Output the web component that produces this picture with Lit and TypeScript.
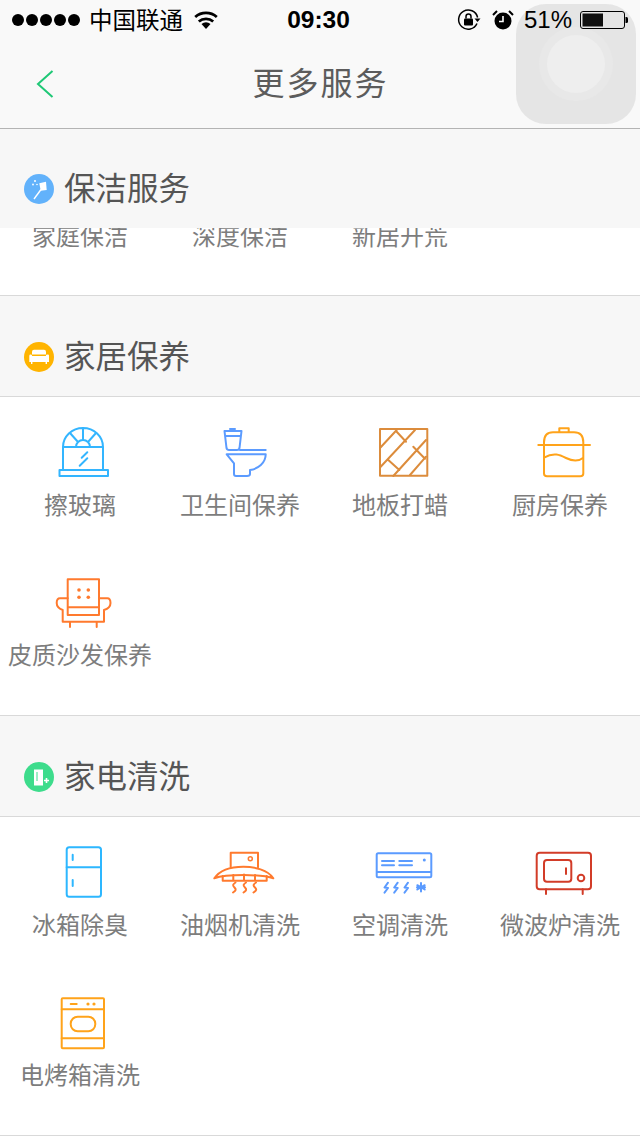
import { LitElement, css, html, svg } from 'lit';
import { customElement } from 'lit/decorators.js';

const line = (color: string, body: unknown) => html`
  <svg class="icon" viewBox="0 0 80 60" fill="none" stroke=${color} stroke-width="2" stroke-linecap="round" stroke-linejoin="round">${body}</svg>
`;

const squiggle = (x: number) => svg`<path d="M${x + 1.5} 41.5c-3 2-3 3 -1 5s1.5 3-1.5 5" />`;

const icons = {
  window: line('#33b5ff', svg`
    <path d="M23 49V26a20 19 0 0 1 40 0V49M23 26H63M36 26a7 7 0 0 1 14 0M43 7V19M30 12l8 9M56 12l-8 9" />
    <path d="M41.7 36.7l5.6-5.4M39.7 44.7l7.6-7.4" />
    <rect x="19.5" y="49" width="48.5" height="6" />
  `),
  toilet: line('#5b9bff', svg`
    <path d="M24.5 10H41.5L39.5 27Q39 29 37 29H29Q27 29 26.5 27ZM25.5 15H40.5M30 8h5M40 29H65.7" />
    <path d="M26.7 33.3H65.7C65.7 42 58 48 50 49V53Q50 55 47 55H36Q34 55 34 53V42.3Z" />
  `),
  floor: line('#dc8c3c', svg`
    <rect x="20" y="8" width="47.3" height="46.7" />
    <path d="M36.7 9L20.7 26.3M36.7 10.7L46 20.7M55 9L20.7 45.7M66 19L33.3 55M28.3 39L39.3 49M66 35.7L50 54M53.3 25.7L65 37.7" />
  `),
  pot: line('#ffa31a', svg`
    <path d="M39.3 11.3V7.3H48.7V11.3M24 21.3C24 14 28 11.3 33 11.3H54C59 11.3 63.3 14 63.3 21.3V24M24 21.3V24M18.3 24H70" />
    <path d="M24 24V52.5Q24 55.3 27 55.3H60.3Q63.3 55.3 63.3 52.5V24M24 36.7C34 31 40 34 46 37S58 41 63.3 36.7" />
  `),
  sofa: line('#ff7a2e', svg`
    <path d="M27.7 36.3V8.3H59V36.3M27.7 36.3H59M27.7 36.3V44H59V36.3" />
    <path d="M27.7 27.3H20Q16.7 27.3 16.7 32T22.7 39V50.7H64V39Q70.5 37 70.5 32T67 27.3H59M30 50.7V56M56.7 50.7V56" />
    <g fill="#ff7a2e" stroke="none">
      <circle cx="39" cy="19" r="1.8" /><circle cx="48.3" cy="19" r="1.8" />
      <circle cx="39" cy="26.3" r="1.8" /><circle cx="48.3" cy="26.3" r="1.8" />
    </g>
  `),
  fridge: line('#2db7ff', svg`
    <rect x="26.7" y="6.3" width="34.3" height="49.4" rx="2.5" />
    <path d="M26.7 26.3H61M32.7 13.7V19M32.7 39V45" />
  `),
  hood: line('#ff7a2e', svg`
    <path d="M30.7 26.3V11.7H58V26.3" />
    <circle cx="50.3" cy="17.7" r="2" stroke-width="1.5" />
    <path d="M14.3 37.3C20 29 32 25.7 43.3 25.7S68 29 73.3 37.3C62 33 26 33 14.3 37.3Z" />
    <path d="M22.7 35V39.7H66.7V35M33.3 34V39.7M44 33.5V39.7M55 34V39.7" />
    ${squiggle(34)}${squiggle(44.5)}${squiggle(54.5)}
  `),
  ac: line('#5b9bff', svg`
    <rect x="16.7" y="12.3" width="54.6" height="24" rx="1.5" />
    <path d="M17 31H71M22 20H34M39.3 20H52M22 24.3H34M39.3 24.3H52" />
    <circle cx="64.3" cy="19" r="1.5" fill="#5b9bff" stroke="none" />
    <path d="M28 41.7L24.5 46.5 28 47 24.5 51.7M37.7 41.7L34.2 46.5 37.7 47 34.2 51.7M48 41.7L44.5 46.5 48 47 44.5 51.7" />
    <path d="M61 42V50.6M57.3 44.2L64.7 48.4M64.7 44.2L57.3 48.4M57 46.3H65" />
  `),
  microwave: line('#d23c28', svg`
    <rect x="16.7" y="11.7" width="54.3" height="36.6" rx="3" />
    <rect x="24" y="19" width="27.3" height="21.7" rx="3" />
    <path d="M46 27.3V33M26 48.3V53M62.7 48.3V53" />
    <circle cx="61" cy="37" r="3.3" />
  `),
  oven: line('#ffa31a', svg`
    <rect x="21.7" y="7.3" width="42.3" height="50" rx="1" />
    <path d="M21.7 18.3H64M21.7 47.3H64M30.7 13H36.7" />
    <rect x="30.7" y="25.7" width="24.6" height="14.6" rx="7" />
    <circle cx="48" cy="13" r="1.6" fill="#ffa31a" stroke="none" />
    <circle cx="54" cy="13" r="1.6" fill="#ffa31a" stroke="none" />
  `),
};

const badge = (color: string, body: unknown) => html`
  <svg class="badge" viewBox="0 0 30 30"><circle cx="15" cy="15" r="15" fill=${color} />${body}</svg>
`;

const badges = {
  duster: badge('#62b2fb', svg`
    <path d="M15.3 9.3L22 7.7 22.7 16 16.7 16.7Z" fill="#fff" />
    <path d="M17 15.5L10 25" stroke="#fff" stroke-width="1.4" />
    <circle cx="11" cy="7" r="1" fill="#fff" /><circle cx="9" cy="10.5" r="0.9" fill="#fff" /><circle cx="13" cy="10.5" r="0.8" fill="#fff" />
  `),
  sofa: badge('#ffb400', svg`
    <path d="M8 12.6V9.7Q8 7.7 10 7.7H20Q22 7.7 22 9.7V12.6Z" fill="#fff" />
    <path d="M5.3 14Q5.3 12.6 6.6 12.6T8.2 14H21.8Q21.8 12.6 23.6 12.6T25 14V20H23V22H21.6V20H8.4V22H7V20H5.3Z" fill="#fff" />
  `),
  fridge: badge('#3ddc8c', svg`
    <rect x="10" y="7.5" width="9" height="16" fill="#fff" />
    <path d="M13 10V19" stroke="#3ddc8c" stroke-width="1" />
    <path d="M22.5 16V21M20 18.5H25" stroke="#fff" stroke-width="1.6" />
  `),
};

const sections = [
  {
    title: '家居保养',
    badge: badges.sofa,
    items: [
      ['擦玻璃', icons.window],
      ['卫生间保养', icons.toilet],
      ['地板打蜡', icons.floor],
      ['厨房保养', icons.pot],
      ['皮质沙发保养', icons.sofa],
    ],
  },
  {
    title: '家电清洗',
    badge: badges.fridge,
    items: [
      ['冰箱除臭', icons.fridge],
      ['油烟机清洗', icons.hood],
      ['空调清洗', icons.ac],
      ['微波炉清洗', icons.microwave],
      ['电烤箱清洗', icons.oven],
    ],
  },
];

@customElement('app-root')
class AppRoot extends LitElement {
  static styles = css`
    :host {
      display: block;
      position: relative;
      width: 640px;
      height: 1136px;
      overflow: hidden;
      background: #fff;
      font-family: 'Noto Sans CJK SC', 'Liberation Sans', sans-serif;
    }

    .top {
      height: 128px;
      background: #f9f9f9;
      border-bottom: 1px solid #b4b4b4;
    }

    .status {
      position: relative;
      z-index: 2;
      display: grid;
      grid-template-columns: 1fr auto 1fr;
      align-items: center;
      height: 40px;
      padding: 0 12px 0 12px;
      color: #000;
      font-size: 23.5px;
    }
    .status > div {
      display: flex;
      align-items: center;
    }
    .left { justify-content: flex-start; }
    .left span:nth-child(2) { margin-bottom: 2px; }
    .right { justify-content: flex-end; }
    .dots { display: flex; gap: 2px; margin-right: 9px; }
    .dots i {
      width: 12px;
      height: 12px;
      border-radius: 50%;
      background: #000;
    }
    .wifi { margin-left: 11px; margin-bottom: 1px; }
    .time {
      font: bold 24.5px 'Liberation Sans', sans-serif;
      margin-right: 3px;
    }
    .pct {
      font: 24px 'Liberation Sans', sans-serif;
      margin: 0 8px 0 10px;
    }
    .lock { margin-right: 11px; }

    .nav {
      position: relative;
      display: flex;
      align-items: center;
      justify-content: center;
      height: 88px;
    }
    .back {
      position: absolute;
      left: 36px;
      top: 29px;
    }
    .title {
      font-size: 32px;
      letter-spacing: 2px;
      color: #5c5c5c;
      margin: 0 0 7px 1px;
    }

    .touch {
      position: absolute;
      left: 516px;
      top: 4px;
      width: 120px;
      height: 120px;
      border-radius: 30px;
      background: rgba(226, 226, 226, 0.86);
      display: flex;
      align-items: center;
      justify-content: center;
    }
    .touch .ring {
      width: 74px;
      height: 74px;
      border-radius: 50%;
      background: #e8e8e8;
      display: flex;
      align-items: center;
      justify-content: center;
    }
    .touch .core {
      width: 58px;
      height: 58px;
      border-radius: 50%;
      background: #eeeeee;
    }

    .head {
      box-sizing: border-box;
      display: flex;
      align-items: center;
      gap: 10px;
      height: 101px;
      padding: 46px 0 24px 24px;
      background: #f7f7f7;
      border-bottom: 1px solid #d9d9d9;
      color: #555;
      font-size: 31.5px;
      line-height: 30px;
    }
    .head span { margin-bottom: 6px; }
    .head.first {
      height: 99px;
      padding: 45px 0 24px 24px;
      border-bottom: none;
    }
    .badge { width: 30px; height: 30px; flex: none; }

    .section { border-bottom: 1px solid #d9d9d9; }

    .clipped {
      display: grid;
      grid-template-columns: repeat(4, 160px);
      height: 67px;
      overflow: hidden;
    }
    .clipped .label { margin-top: -8px; }

    .grid {
      display: grid;
      grid-template-columns: repeat(4, 160px);
      grid-auto-rows: 150px;
      padding-bottom: 18px;
    }
    .item {
      display: flex;
      flex-direction: column;
      align-items: center;
      padding-top: 24px;
    }
    .icon { width: 80px; height: 60px; margin-bottom: 8px; display: block; }
    .label {
      font-size: 24px;
      line-height: 30px;
      color: #7d7d7d;
      text-align: center;
      white-space: nowrap;
    }
  `;

  protected render(): unknown {
    return html`
      <div class="top">
        <div class="status">
          <div class="left">
            <span class="dots"><i></i><i></i><i></i><i></i><i></i></span>
            <span>中国联通</span>
            <svg class="wifi" width="24" height="18" viewBox="0 0 24 18">
              <path d="M12 18L7.5 13a7 7 0 0 1 9 0Z" />
              <path d="M4.8 10.5a11 11 0 0 1 14.4 0" fill="none" stroke="#000" stroke-width="2.8" />
              <path d="M1.2 6a16.5 16.5 0 0 1 21.6 0" fill="none" stroke="#000" stroke-width="2.8" />
            </svg>
          </div>
          <div class="time">09:30</div>
          <div class="right">
            <svg class="lock" width="24" height="24" viewBox="0 0 24 24">
              <path d="M20 15.5A9.6 9.6 0 1 1 20.6 9.5" fill="none" stroke="#000" stroke-width="1.5" />
              <path d="M17.5 10.5h6l-3 3.5Z" />
              <rect x="7" y="10.5" width="9" height="7" rx="1" />
              <path d="M9 10.5V8.5a2.5 2.5 0 0 1 5 0v2" fill="none" stroke="#000" stroke-width="1.5" />
            </svg>
            <svg width="22" height="22" viewBox="0 0 22 22">
              <circle cx="11" cy="12" r="8.5" />
              <path d="M11 7V12.5H7" fill="none" stroke="#fff" stroke-width="1.6" />
              <path d="M1 6L5 2M21 6L17 2" stroke="#000" stroke-width="2" />
            </svg>
            <span class="pct">51%</span>
            <svg width="48" height="18" viewBox="0 0 48 18">
              <rect x="0.5" y="0.5" width="44" height="17" rx="2.5" fill="none" stroke="#000" />
              <rect x="2.5" y="2.5" width="20.5" height="13" fill="#111" />
              <path d="M45.5 6h1a1.5 1.5 0 0 1 1.5 1.5v3a1.5 1.5 0 0 1-1.5 1.5h-1Z" />
            </svg>
          </div>
        </div>
        <div class="nav">
          <svg class="back" width="18" height="30" viewBox="0 0 18 30" fill="none" stroke="#1fc876" stroke-width="2">
            <path d="M16.5 2L2 15 16.5 28" />
          </svg>
          <span class="title">更多服务</span>
        </div>
      </div>

      <div class="section">
        <div class="head first">${badges.duster}<span>保洁服务</span></div>
        <div class="clipped">
          <div class="label">家庭保洁</div>
          <div class="label">深度保洁</div>
          <div class="label">新居开荒</div>
        </div>
      </div>

      ${sections.map(
        (s) => html`
          <div class="section">
            <div class="head">${s.badge}<span>${s.title}</span></div>
            <div class="grid">
              ${s.items.map(
                ([label, icon]) => html`
                  <div class="item">${icon}<div class="label">${label}</div></div>
                `
              )}
            </div>
          </div>
        `
      )}

      <div class="touch"><div class="ring"><div class="core"></div></div></div>
    `;
  }
}
